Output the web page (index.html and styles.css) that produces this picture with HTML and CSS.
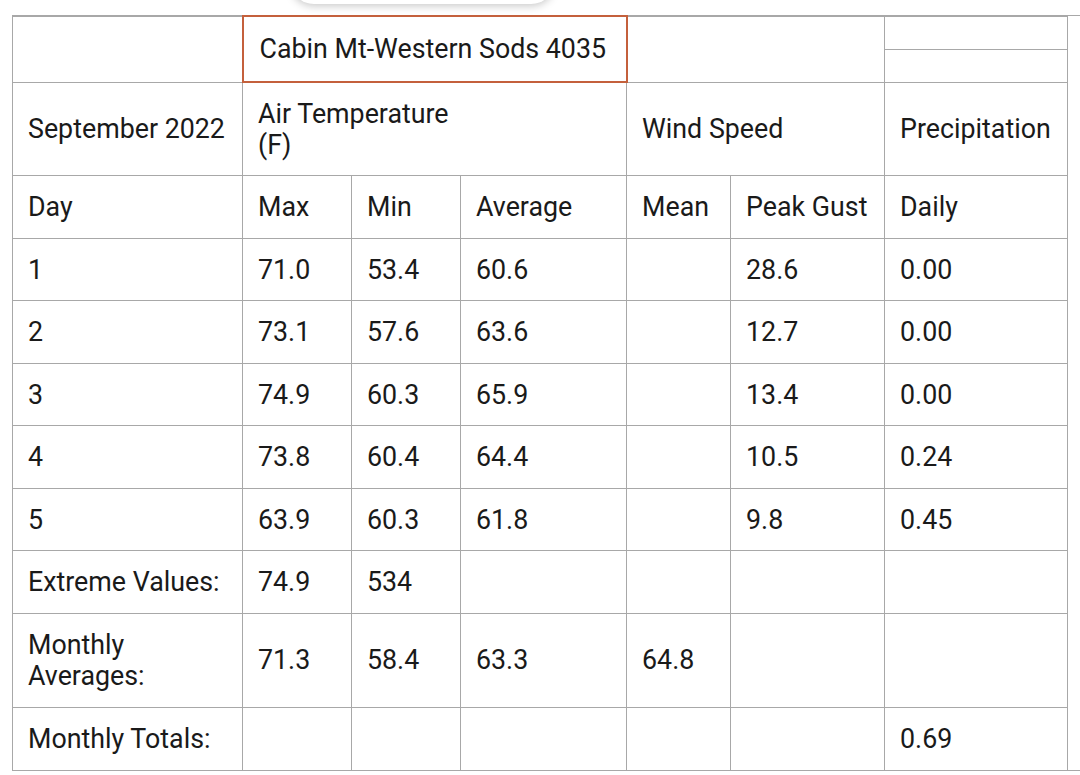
FILE: index.html
```html
<!DOCTYPE html>
<html>
<head>
<meta charset="utf-8">
<link rel="stylesheet" href="styles.css">
</head>
<body>
<div class="toolbar-shadow"></div>
<div class="frame">
<table class="wx">
<colgroup>
<col class="c-label"><col class="c-max"><col class="c-min"><col class="c-avg"><col class="c-mean"><col class="c-gust"><col class="c-daily">
</colgroup>
<tbody>
<tr class="r-half">
<td rowspan="2"></td>
<td rowspan="2" colspan="3" class="station">Cabin Mt-Western Sods 4035</td>
<td rowspan="2" colspan="2"></td>
<td class="empty"></td>
</tr>
<tr class="r-half"><td class="empty"></td></tr>
<tr>
<td>September 2022</td>
<td colspan="3">Air Temperature<br>(F)</td>
<td colspan="2">Wind Speed</td>
<td>Precipitation</td>
</tr>
<tr><td>Day</td><td>Max</td><td>Min</td><td>Average</td><td>Mean</td><td>Peak Gust</td><td>Daily</td></tr>
<tr><td>1</td><td>71.0</td><td>53.4</td><td>60.6</td><td></td><td>28.6</td><td>0.00</td></tr>
<tr><td>2</td><td>73.1</td><td>57.6</td><td>63.6</td><td></td><td>12.7</td><td>0.00</td></tr>
<tr><td>3</td><td>74.9</td><td>60.3</td><td>65.9</td><td></td><td>13.4</td><td>0.00</td></tr>
<tr><td>4</td><td>73.8</td><td>60.4</td><td>64.4</td><td></td><td>10.5</td><td>0.24</td></tr>
<tr><td>5</td><td>63.9</td><td>60.3</td><td>61.8</td><td></td><td>9.8</td><td>0.45</td></tr>
<tr><td>Extreme Values:</td><td>74.9</td><td>534</td><td></td><td></td><td></td><td></td></tr>
<tr class="tall"><td>Monthly<br>Averages:</td><td>71.3</td><td>58.4</td><td>63.3</td><td>64.8</td><td></td><td></td></tr>
<tr><td>Monthly Totals:</td><td></td><td></td><td></td><td></td><td></td><td>0.69</td></tr>
</tbody>
</table>
</div>
</body>
</html>
```

FILE: styles.css
```css
html, body {
  margin: 0;
  padding: 0;
  background: #ffffff;
}
body {
  font-family: Roboto, "Liberation Sans", sans-serif;
  color: #1a1a1a;
  position: relative;
  width: 1080px;
  height: 775px;
  overflow: hidden;
}
.toolbar-shadow {
  position: absolute;
  top: -44px;
  left: 290px;
  width: 265px;
  height: 48px;
  border-radius: 24px;
  background: #ffffff;
  box-shadow: 0 2px 9px rgba(0, 0, 0, 0.22);
}
.frame {
  margin: 15px 0 0 12px;
  border-top: 1px solid #a8a8a8;
  border-bottom: 1px solid #a8a8a8;
  width: 1068px;
}
.wx {
  border-collapse: collapse;
  table-layout: fixed;
  width: 1055px;
  font-size: 26.8px;
  line-height: 30.5px;
  margin-top: -1px;
  margin-bottom: -1px;
}
.c-label { width: 230px; }
.c-max { width: 109px; }
.c-min { width: 109px; }
.c-avg { width: 166px; }
.c-mean { width: 104px; }
.c-gust { width: 154px; }
.c-daily { width: 183px; }
.wx td {
  border: 1px solid #a8a8a8;
  padding: 16px 15px 15px 15px;
  vertical-align: middle;
  text-align: left;
  white-space: nowrap;
}
.wx tr.tall td {
  padding-top: 16.5px;
  padding-bottom: 16px;
}
.wx td.empty {
  padding: 0;
  height: 32px;
}
.wx td.station {
  border: 2px solid #c4603c;
  padding-left: 16px;
  padding-top: 14px;
  padding-bottom: 14px;
}
```
